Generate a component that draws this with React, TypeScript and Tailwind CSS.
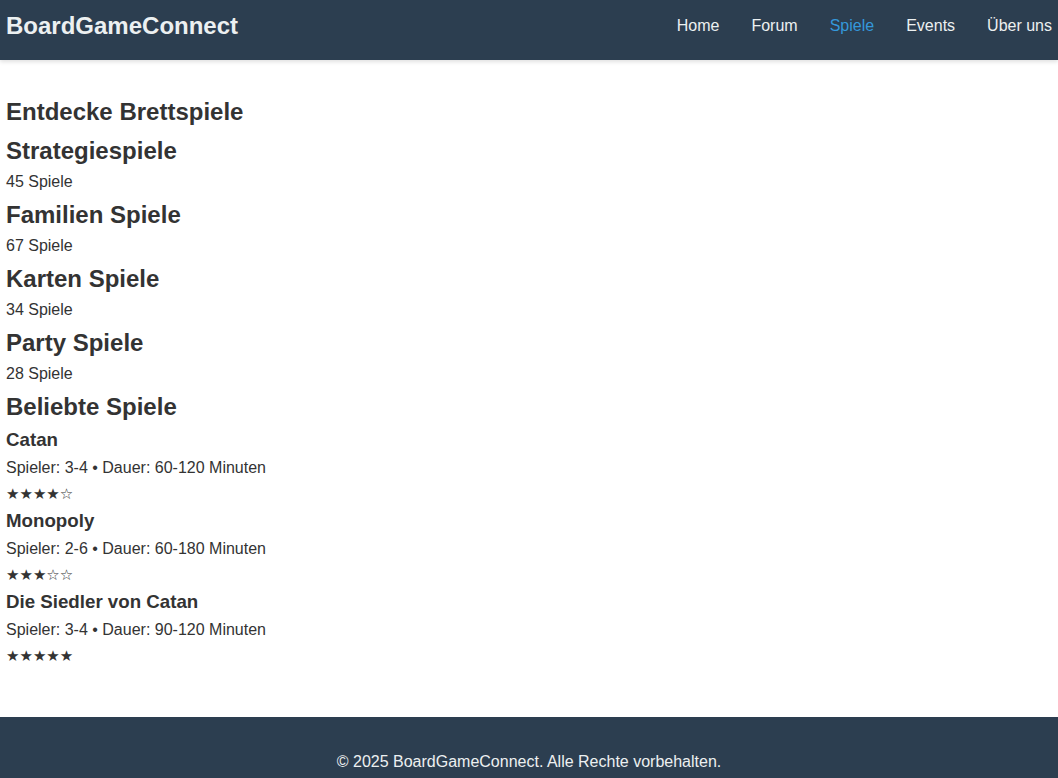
import React from "react";

const categories = [
  { name: "Strategiespiele", count: "45 Spiele" },
  { name: "Familien Spiele", count: "67 Spiele" },
  { name: "Karten Spiele", count: "34 Spiele" },
  { name: "Party Spiele", count: "28 Spiele" },
];

const games = [
  { name: "Catan", info: "Spieler: 3-4 • Dauer: 60-120 Minuten", stars: "★★★★☆" },
  { name: "Monopoly", info: "Spieler: 2-6 • Dauer: 60-180 Minuten", stars: "★★★☆☆" },
  { name: "Die Siedler von Catan", info: "Spieler: 3-4 • Dauer: 90-120 Minuten", stars: "★★★★★" },
];

export default function App() {
  return (
    <div className="min-h-screen bg-white text-[#333] font-['Liberation_Sans','DejaVu_Sans',Arial,sans-serif]">
      <header className="h-[60px] bg-[#2c3e50] shadow-[0_2px_4px_rgba(0,0,0,0.12)] flex items-start justify-between px-[6px] pt-[12px]">
        <div className="text-[24px] leading-[28px] font-bold text-[#ecf0f1]">BoardGameConnect</div>
        <nav className="flex gap-8 text-[16px] leading-[28px] text-[#ecf0f1]">
          <a>Home</a>
          <a>Forum</a>
          <a className="text-[#3498db]">Spiele</a>
          <a>Events</a>
          <a>Über uns</a>
        </nav>
      </header>
      <main className="px-[6px] pt-[38px] pb-[48px]">
        <h2 className="text-[24px] leading-[28px] font-bold">Entdecke Brettspiele</h2>
        <div className="mt-[11px] flex flex-col">
          {categories.map((c) => (
            <div key={c.name} className="mb-[10px]">
              <h3 className="text-[24px] leading-[28px] font-bold">{c.name}</h3>
              <p className="mt-[8px] text-[16px] leading-[18px]">{c.count}</p>
            </div>
          ))}
          <h2 className="text-[24px] leading-[28px] font-bold">Beliebte Spiele</h2>
        </div>
        <div className="mt-[5px] flex flex-col">
          {games.map((g) => (
            <div key={g.name}>
              <h3 className="text-[18.72px] leading-[28px] font-bold">{g.name}</h3>
              <p className="text-[16px] leading-[27px]">{g.info}</p>
              <div className="text-[15px] leading-[26px] font-['DejaVu_Sans',sans-serif]">{g.stars}</div>
            </div>
          ))}
        </div>
      </main>
      <footer className="bg-[#2c3e50] text-[#ecf0f1] text-center text-[16px] leading-[18px] pt-[36px] pb-[35px]">
        © 2025 BoardGameConnect. Alle Rechte vorbehalten.
      </footer>
    </div>
  );
}
